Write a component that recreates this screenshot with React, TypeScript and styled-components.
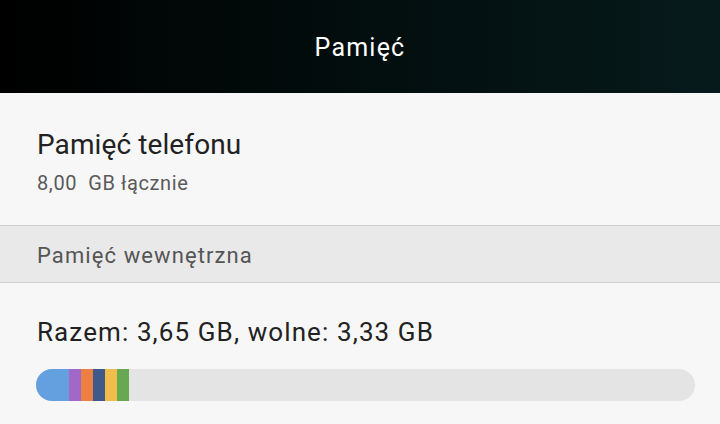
import React from "react";
import styled, { createGlobalStyle } from "styled-components";

const Global = createGlobalStyle`
  html, body { margin: 0; padding: 0; background: #f7f7f7; }
  body { font-family: Roboto, "Noto Sans", sans-serif; }
`;

const Page = styled.div`
  width: 720px;
  height: 424px;
  overflow: hidden;
  background: #f7f7f7;
  display: flex;
  flex-direction: column;
`;

const Header = styled.header`
  height: 93px;
  flex: none;
  background: linear-gradient(90deg, #000000 0%, #020c0c 45%, #071a1b 100%);
  display: flex;
  align-items: center;
  justify-content: center;
  color: #ffffff;
  font-size: 25px;
  letter-spacing: 1.2px;
  font-weight: 400;
  padding-top: 2px;
  box-sizing: border-box;
`;

const Item = styled.div`
  height: 133px;
  flex: none;
  padding: 35px 37px 0;
  box-sizing: border-box;
  border-bottom: 1px solid #cfcfcf;
`;

const ItemTitle = styled.div`
  font-size: 28px;
  letter-spacing: 0.1px;
  color: #222;
  line-height: 34px;
`;

const ItemSub = styled.div`
  font-size: 20px;
  letter-spacing: 0.6px;
  line-height: 26px;
  color: #5a5a5a;
  margin-top: 8px;
  white-space: pre;
`;

const SectionHeader = styled.div`
  height: 57px;
  flex: none;
  background: #e9e9e9;
  border-bottom: 1px solid #cfcfcf;
  box-sizing: border-box;
  display: flex;
  align-items: center;
  padding: 2px 37px 0;
  font-size: 22px;
  letter-spacing: 1.1px;
  color: #555;
`;

const Usage = styled.div`
  padding: 33px 25px 0 36px;
`;

const UsageText = styled.div`
  font-size: 26px;
  letter-spacing: 1.1px;
  color: #222;
  line-height: 32px;
  padding-left: 1px;
`;

const Bar = styled.div`
  margin-top: 21px;
  height: 32px;
  border-radius: 16px;
  background: #e4e4e4;
  overflow: hidden;
  display: flex;
`;

const Seg = styled.div<{ $c: string }>`
  background: ${(p) => p.$c};
  height: 100%;
  flex: none;
`;

const segments = [
  { c: "#64a0e0", w: 33 },
  { c: "#a268c8", w: 12 },
  { c: "#ec7f43", w: 12 },
  { c: "#3f5a8a", w: 12 },
  { c: "#eebd4a", w: 12 },
  { c: "#68a852", w: 12 },
];

export default function App() {
  return (
    <Page>
      <Global />
      <Header>Pamięć</Header>
      <Item>
        <ItemTitle>Pamięć telefonu</ItemTitle>
        <ItemSub>8,00  GB łącznie</ItemSub>
      </Item>
      <SectionHeader>Pamięć wewnętrzna</SectionHeader>
      <Usage>
        <UsageText>Razem: 3,65 GB, wolne: 3,33 GB</UsageText>
        <Bar>
          {segments.map((s, i) => (
            <Seg key={i} $c={s.c} style={{ width: s.w }} />
          ))}
        </Bar>
      </Usage>
    </Page>
  );
}
